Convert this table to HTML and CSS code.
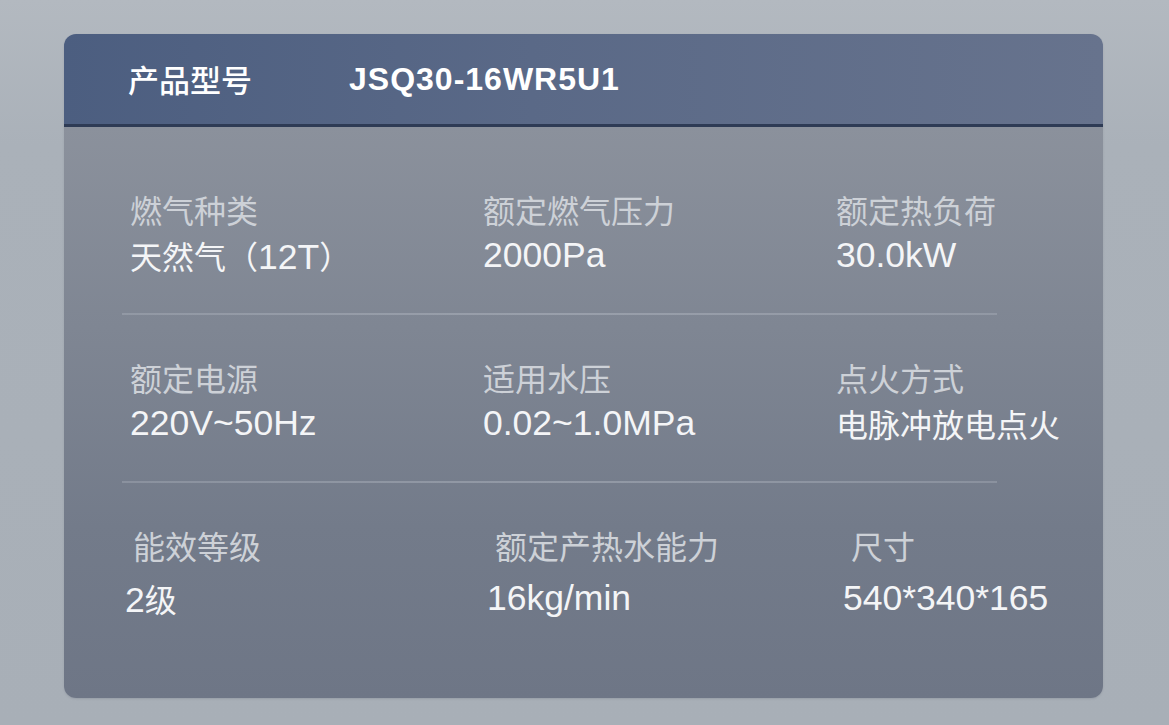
FILE: index.html
```html
<!DOCTYPE html>
<html lang="zh-CN">
<head>
<meta charset="utf-8">
<title>产品参数</title>
<link rel="stylesheet" href="styles.css">
</head>
<body>
<div class="page">
  <div class="card">
    <div class="card-head">
      <span class="head-label">产品型号</span>
      <span class="head-model">JSQ30-16WR5U1</span>
    </div>
    <div class="card-body">
      <div class="row">
        <div class="cell"><div class="label">燃气种类</div><div class="value">天然气（<span class="num">12T</span>）</div></div>
        <div class="cell"><div class="label">额定燃气压力</div><div class="value latin">2000Pa</div></div>
        <div class="cell"><div class="label">额定热负荷</div><div class="value latin">30.0kW</div></div>
      </div>
      <div class="sep"></div>
      <div class="row">
        <div class="cell"><div class="label">额定电源</div><div class="value latin">220V~50Hz</div></div>
        <div class="cell"><div class="label">适用水压</div><div class="value latin">0.02~1.0MPa</div></div>
        <div class="cell"><div class="label">点火方式</div><div class="value">电脉冲放电点火</div></div>
      </div>
      <div class="sep"></div>
      <div class="row row-last">
        <div class="cell"><div class="label">能效等级</div><div class="value"><span class="num">2</span>级</div></div>
        <div class="cell"><div class="label">额定产热水能力</div><div class="value latin">16kg/min</div></div>
        <div class="cell"><div class="label">尺寸</div><div class="value latin">540*340*165</div></div>
      </div>
    </div>
  </div>
</div>
</body>
</html>
```

FILE: styles.css
```css
html, body {
  margin: 0;
  padding: 0;
}
body {
  width: 1169px;
  height: 725px;
  overflow: hidden;
  font-family: "Liberation Sans", "Noto Sans CJK SC", sans-serif;
  background: linear-gradient(180deg, #b3b9c0 0%, #aab1b9 20%, #a8afb7 100%);
}
.page {
  padding: 34px 0 0 64px;
}
.card {
  width: 1039px;
  height: 664px;
  border-radius: 12px;
  overflow: hidden;
  display: flex;
  flex-direction: column;
  box-shadow: 0 1px 2px rgba(60, 70, 90, 0.15);
}
.card-head {
  height: 90px;
  flex: none;
  display: flex;
  align-items: center;
  padding-left: 64px;
  background: linear-gradient(90deg, #4c5e80 0%, #5a6987 45%, #67738d 100%);
  border-bottom: 3px solid #2e3b55;
  color: #ffffff;
}
.head-label {
  font-family: "Noto Sans CJK SC", sans-serif;
  font-size: 31px;
  font-weight: 500;
  line-height: 40px;
}
.head-model {
  font-size: 32px;
  font-weight: 700;
  letter-spacing: 1px;
  margin-left: 97px;
  line-height: 40px;
}
.card-body {
  flex: 1;
  padding-top: 59px;
  background: linear-gradient(180deg, #8b919c 0%, #7f8693 35%, #737b8a 70%, #6e7686 100%);
}
.row {
  display: grid;
  grid-template-columns: 353px 353px 267px;
  padding-left: 66px;
}
.label {
  font-family: "Noto Sans CJK SC", sans-serif;
  font-size: 32px;
  line-height: 46px;
  color: #cdd1d7;
  white-space: nowrap;
}
.value {
  font-family: "Noto Sans CJK SC", sans-serif;
  font-size: 32px;
  line-height: 46px;
  color: #f4f5f7;
  white-space: nowrap;
}
.value.latin,
.num {
  font-family: "Liberation Sans", sans-serif;
  font-size: 35.5px;
}
.num {
  line-height: 1;
}
.sep {
  height: 2px;
  margin: 35px 106px 39px 58px;
  background: linear-gradient(90deg, rgba(200,205,214,0.25), rgba(200,205,214,0.35) 50%, rgba(200,205,214,0.25));
}
.row-last {
  grid-template-columns: 362px 356px 260px;
  padding-left: 61px;
}
.row-last .label {
  padding-left: 8px;
  margin-bottom: 7px;
}
```
